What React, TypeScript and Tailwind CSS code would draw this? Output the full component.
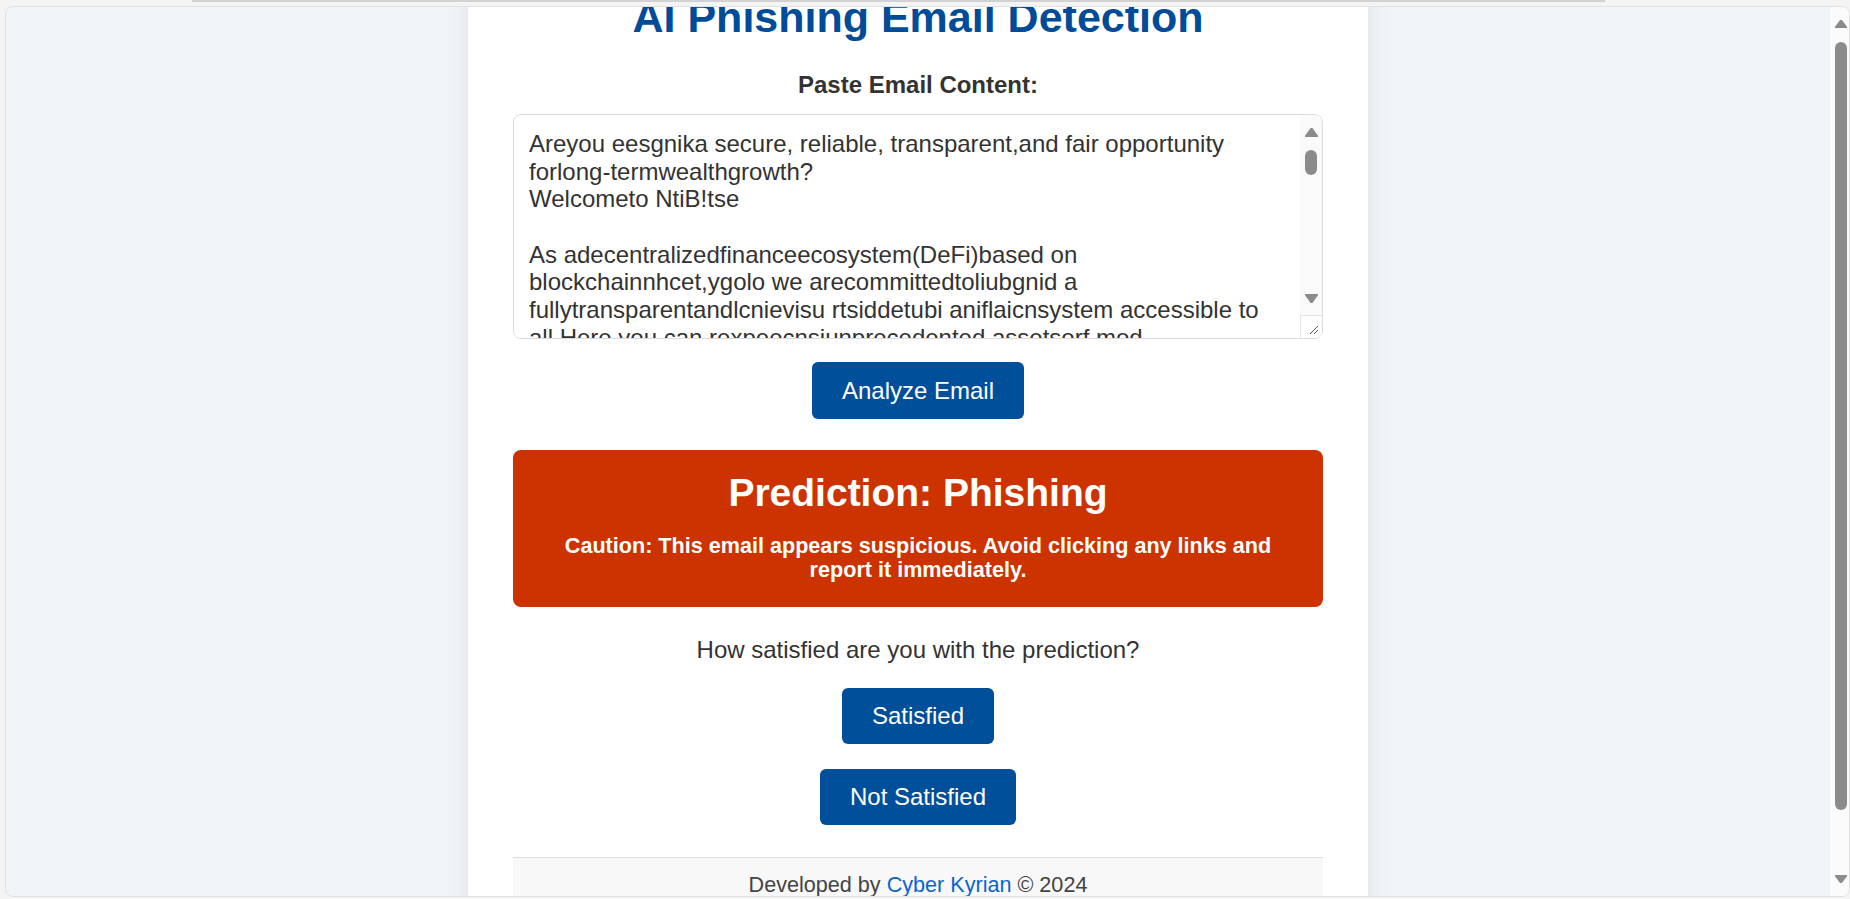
import React from "react";

function Tri({ dir, w, h, color }: { dir: "up" | "down"; w: number; h: number; color: string }) {
  const pts = dir === "up" ? `${w / 2},0 ${w},${h} 0,${h}` : `0,0 ${w},0 ${w / 2},${h}`;
  return (
    <svg width={w} height={h} viewBox={`0 0 ${w} ${h}`} className="block">
      <polygon points={pts} fill={color} strokeLinejoin="round" stroke={color} strokeWidth="1.5" />
    </svg>
  );
}

const lines = [
  "Areyou eesgnika secure, reliable, transparent,and fair opportunity",
  "forlong-termwealthgrowth?",
  "Welcometo NtiB!tse",
  "",
  "As adecentralizedfinanceecosystem(DeFi)based on",
  "blockchainnhcet,ygolo we arecommittedtoliubgnid a",
  "fullytransparentandlcnievisu rtsiddetubi aniflaicnsystem accessible to",
  "all.Here you can rexpeecnsiunprecedented assetsorf mod",
];

export default function App() {
  return (
    <div className="h-[899px] w-full bg-[#f4f4f4] flex flex-col overflow-hidden font-['Liberation_Sans',Arial,sans-serif]">
      {/* top strip */}
      <div className="h-[6px] shrink-0">
        <div className="h-[2px] ml-[192px] w-[1413px] bg-[#d2d2d2]" />
      </div>
      {/* browser frame */}
      <div className="flex-1 ml-[5px] mb-[2px] flex border border-[#e1e1e1] rounded-[8px] overflow-hidden bg-[#f2f5f8]">
        <div className="flex-1 overflow-hidden">
          <div className="w-[900px] mx-auto mt-[-44px] bg-white shadow-[0_0_22px_rgba(30,40,60,0.10)] px-[45px] pt-[30px]">
            <h1 className="text-[43px] leading-[49px] font-bold text-center text-[#004c99] mb-[29px]">
              AI Phishing Email Detection
            </h1>
            <div className="text-[24px] leading-[28px] font-bold text-center text-[#333333] mb-[15px]">
              Paste Email Content:
            </div>
            {/* textarea look-alike */}
            <div className="h-[225px] border border-[#dcdcdc] rounded-[8px] overflow-hidden flex bg-white">
              <div className="flex-1 overflow-hidden pl-[15px] pt-[15px] text-[24px] leading-[27.7px] text-[#333333]">
                {lines.map((l, i) => (
                  <div key={i} className="whitespace-pre h-[27.7px]">
                    {l}
                  </div>
                ))}
              </div>
              <div className="w-[22px] bg-[#fafafa] flex flex-col items-center">
                <div className="mt-[13px]">
                  <Tri dir="up" w={13} h={9} color="#8b8b8b" />
                </div>
                <div className="mt-[13px] h-[25px] w-[12px] rounded-full bg-[#8b8b8b]" />
                <div className="flex-1" />
                <Tri dir="down" w={13} h={9} color="#8b8b8b" />
                <div className="mt-[12px] h-[23px] w-full border-l border-t border-[#e4e4e4] bg-white flex items-end justify-end p-[3px]">
                  <svg width="10" height="10" viewBox="0 0 10 10" className="block">
                    <line x1="1" y1="9" x2="9" y2="1" stroke="#555" strokeWidth="1" />
                    <line x1="5" y1="9" x2="9" y2="5" stroke="#555" strokeWidth="1" />
                  </svg>
                </div>
              </div>
            </div>
            <div className="flex justify-center mt-[23px]">
              <button className="bg-[#004f9b] text-white text-[24px] leading-[28px] px-[30px] py-[14.5px] rounded-[6px]">
                Analyze Email
              </button>
            </div>
            {/* result */}
            <div className="mt-[31px] bg-[#cc3300] rounded-[8px] text-white text-center pt-[21px] pb-[25px] px-[40px]">
              <div className="text-[39px] leading-[44px] font-bold mb-[19px]">Prediction: Phishing</div>
              <div className="text-[21.6px] leading-[24px] font-bold">
                Caution: This email appears suspicious. Avoid clicking any links and report it immediately.
              </div>
            </div>
            <div className="mt-[29px] text-[24px] leading-[28px] text-center text-[#333333]">
              How satisfied are you with the prediction?
            </div>
            <div className="flex flex-col items-center mt-[24px] gap-[25px]">
              <button className="bg-[#004f9b] text-white text-[24px] leading-[28px] px-[30px] py-[14px] rounded-[6px]">
                Satisfied
              </button>
              <button className="bg-[#004f9b] text-white text-[24px] leading-[28px] px-[30px] py-[14px] rounded-[6px]">
                Not Satisfied
              </button>
            </div>
            <div className="mt-[32px] border-t border-[#dddddd] bg-[#f8f8f8] pt-[14px] pb-[20px] text-center text-[21.6px] leading-[26px] text-[#444444]">
              Developed by <span className="text-[#0a66cc]">Cyber Kyrian</span> © 2024
            </div>
          </div>
        </div>
        {/* page scrollbar */}
        <div className="w-[19px] shrink-0 bg-[#fbfbfb] flex flex-col items-center pl-[2px]">
          <div className="mt-[13px]">
            <Tri dir="up" w={12} h={8} color="#8b8b8b" />
          </div>
          <div className="mt-[14px] h-[768px] w-[12px] rounded-full bg-[#8b8b8b]" />
          <div className="flex-1" />
          <div className="mb-[13px]">
            <Tri dir="down" w={12} h={8} color="#8b8b8b" />
          </div>
        </div>
      </div>
    </div>
  );
}
